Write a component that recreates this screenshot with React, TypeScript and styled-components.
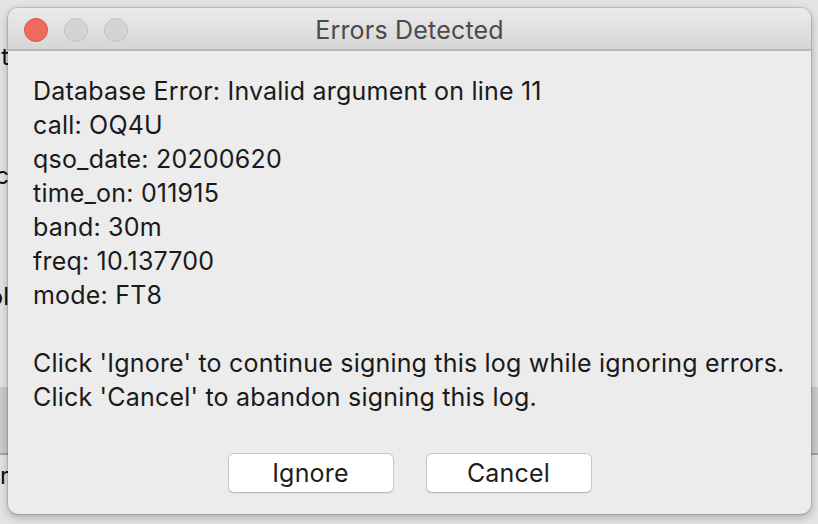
import styled, { createGlobalStyle } from "styled-components";

const GlobalStyle = createGlobalStyle`
  html, body {
    margin: 0;
    padding: 0;
    background: #e2e2e2;
  }
`;

const details = [
  "Database Error: Invalid argument on line 11",
  "call: OQ4U",
  "qso_date: 20200620",
  "time_on: 011915",
  "band: 30m",
  "freq: 10.137700",
  "mode: FT8",
];

const hints = [
  "Click 'Ignore' to continue signing this log while ignoring errors.",
  "Click 'Cancel' to abandon signing this log.",
];

// bits of the window behind the dialog that peek out at the left edge
const upperPeeks = [
  { text: "Edit", gap: 43 },
  { text: "Proc", gap: 91 },
  { text: "Symbol", gap: 93 },
];

export default function App() {
  return (
    <>
      <GlobalStyle />
      <Desktop>
        <BackWindow>
          <PeekColumn>
            {upperPeeks.map((p) => (
              <PeekLabel key={p.text} $gap={p.gap}>
                {p.text}
              </PeekLabel>
            ))}
          </PeekColumn>
          <Band />
          <PeekColumn>
            <PeekLabel $gap={7}>Ver</PeekLabel>
          </PeekColumn>
        </BackWindow>

        <Dialog>
          <TitleBar>
            <Lights>
              <Light $color="#ee6a5f" $ring="#d6564b" />
              <Light $color="#d4d4d4" $ring="#c2c2c2" />
              <Light $color="#d4d4d4" $ring="#c2c2c2" />
            </Lights>
            <Title>Errors Detected</Title>
          </TitleBar>
          <Body>
            <Message>
              {details.map((line) => (
                <Line key={line}>{line}</Line>
              ))}
              <Line>&nbsp;</Line>
              {hints.map((line) => (
                <Line key={line}>{line}</Line>
              ))}
            </Message>
            <Buttons>
              <PushButton>Ignore</PushButton>
              <PushButton>Cancel</PushButton>
            </Buttons>
          </Body>
        </Dialog>
      </Desktop>
    </>
  );
}

const Desktop = styled.div`
  position: relative;
  width: 818px;
  height: 524px;
  overflow: hidden;
  background: #e4e4e4;
  font-family: Inter, "Liberation Sans", sans-serif;
`;

const BackWindow = styled.div`
  display: flex;
  flex-direction: column;
  height: 100%;
`;

const PeekColumn = styled.div`
  display: flex;
  flex-direction: column;
  align-items: flex-end;
  width: 8px;
  overflow: hidden;
  &:first-child {
    height: 387px;
  }
`;

const PeekLabel = styled.div<{ $gap: number }>`
  margin-top: ${(p) => p.$gap}px;
  height: 28px;
  line-height: 28px;
  font-size: 24px;
  color: #111;
  white-space: nowrap;
  direction: rtl;
  margin-right: -1px;
`;

const Band = styled.div`
  height: 66px;
  flex-shrink: 0;
  background: #cbcbcb;
  border-bottom: 2px solid #a4a4a4;
`;

const Dialog = styled.div`
  position: absolute;
  left: 8px;
  top: 8px;
  width: 803px;
  height: 506px;
  display: flex;
  flex-direction: column;
  background: #ececec;
  border-radius: 10px;
  overflow: hidden;
  box-shadow: 0 0 0 1px rgba(0, 0, 0, 0.12), 0 3px 10px rgba(0, 0, 0, 0.28);
`;

const TitleBar = styled.div`
  position: relative;
  height: 41px;
  flex-shrink: 0;
  display: flex;
  align-items: center;
  justify-content: center;
  background: linear-gradient(#ebebeb, #d6d6d6);
  border-bottom: 2px solid #b6b6b6;
`;

const Lights = styled.div`
  position: absolute;
  left: 16px;
  top: 10px;
  display: flex;
  gap: 16px;
`;

const Light = styled.div<{ $color: string; $ring: string }>`
  width: 24px;
  height: 24px;
  box-sizing: border-box;
  border-radius: 50%;
  background: ${(p) => p.$color};
  border: 1px solid ${(p) => p.$ring};
`;

const Title = styled.div`
  font-size: 25px;
  letter-spacing: 0.2px;
  color: #4b4b4b;
  padding-top: 2px;
`;

const Body = styled.div`
  flex: 1;
  display: flex;
  flex-direction: column;
  padding: 23px 25px 21px;
`;

const Message = styled.div`
  flex: 1;
  font-size: 25px;
  letter-spacing: 0.2px;
  color: #1a1a1a;
`;

const Line = styled.div`
  height: 34px;
  line-height: 34px;
  white-space: nowrap;
`;

const Buttons = styled.div`
  display: flex;
  justify-content: center;
  gap: 32px;
`;

const PushButton = styled.button`
  width: 166px;
  height: 40px;
  padding: 0;
  background: #fff;
  border: 1px solid #c6c6c6;
  border-bottom-color: #b8b8b8;
  border-radius: 6px;
  font-family: inherit;
  font-size: 25px;
  letter-spacing: 0.2px;
  color: #1e1e1e;
  box-shadow: 0 1px 1px rgba(0, 0, 0, 0.06);
`;
